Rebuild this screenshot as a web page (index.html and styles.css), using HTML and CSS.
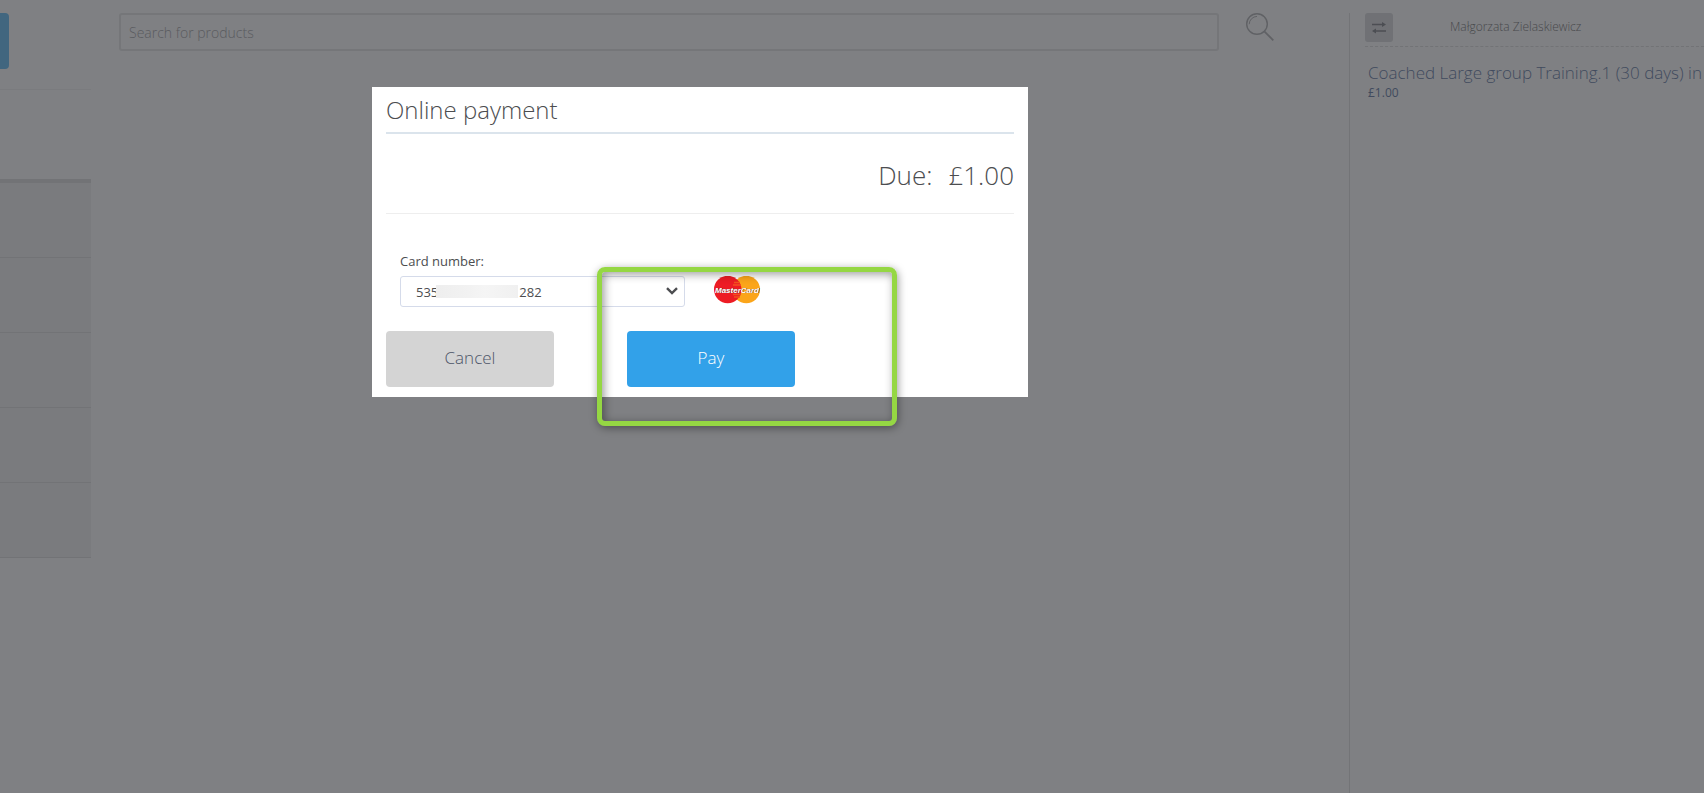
FILE: index.html
```html
<!DOCTYPE html>
<html lang="en">
<head>
<meta charset="utf-8">
<meta name="viewport" content="width=device-width, initial-scale=1">
<title>Online payment</title>
<link rel="stylesheet" href="styles.css">
</head>
<body>
<div class="app">
  <aside class="sidebar">
    <div class="sidebar-top"><button class="sidebar-action" type="button" aria-label="New sale"></button></div>
    <ul class="category-list">
      <li></li><li></li><li></li><li></li><li></li>
    </ul>
  </aside>

  <main class="catalog">
    <form class="search">
      <input class="search-input" type="text" placeholder="Search for products" aria-label="Search for products">
      <button class="search-button" type="button" aria-label="Search">
        <svg viewBox="0 0 28 28" width="28" height="28" fill="none" stroke="#606165">
          <circle cx="11" cy="11" r="10.3" stroke-width="1.4"/>
          <path d="M3.2 11.2A8 8 0 0 1 11 3.4" stroke-width="1"/>
          <path d="M18.3 18.3L27.3 27.3" stroke-width="1.8"/>
        </svg>
      </button>
    </form>
  </main>

  <aside class="cart">
    <header class="cart-header">
      <button class="swap-button" type="button" aria-label="Change client">
        <svg viewBox="0 0 14 12" width="14" height="12" fill="none" stroke="#4c4e53" stroke-width="1.3">
          <path d="M0 2.5H11M3 9H14"/>
          <path d="M10 0L14 2.5L10 5ZM4 6.5L0 9L4 11.5Z" fill="#4c4e53" stroke="none"/>
        </svg>
      </button>
      <span class="client-name">Małgorzata Zielaskiewicz</span>
    </header>
    <div class="cart-item">
      <div class="item-name">Coached Large group Training.1 (30 days) in</div>
      <div class="item-price">£1.00</div>
    </div>
  </aside>
</div>

<div class="overlay">
  <section class="dialog" role="dialog" aria-labelledby="dialog-title">
    <h1 class="dialog-title" id="dialog-title">Online payment</h1>
    <div class="due"><span>Due:</span><span>£1.00</span></div>
    <div class="card-field">
      <label class="card-label" for="card">Card number:</label>
      <div class="card-row">
        <div class="select-wrap">
          <select class="card-select" id="card">
            <option>535&nbsp;&nbsp;&nbsp;&nbsp;&nbsp;&nbsp;&nbsp;&nbsp;&nbsp;&nbsp;&nbsp;&nbsp;&nbsp;&nbsp;&nbsp;&nbsp;&nbsp;&nbsp;&nbsp;&nbsp;&nbsp;&nbsp;&nbsp;&nbsp;282</option>
          </select>
          <span class="number-mask"></span>
          <svg class="chevron" viewBox="0 0 12 8" width="12" height="8" fill="none" stroke="#4c4d50" stroke-width="2.4"><path d="M1 1.2L6 6L11 1.2"/></svg>
        </div>
        <svg class="card-logo" viewBox="0 0 48 28" width="48" height="28" role="img" aria-label="MasterCard">
          <circle cx="33.3" cy="13.5" r="13.7" fill="#fba51a"/>
          <circle cx="14.7" cy="13.5" r="13.7" fill="#ed1c24"/>
          <path d="M21 6.5H27M20 9H28M20 18.5H28M21 21H27" stroke="#f4511f" stroke-width="1.3"/>
          <text class="logo-shadow" x="24.6" y="17.2" text-anchor="middle">MasterCard</text>
          <text class="logo-text" x="24" y="16.5" text-anchor="middle">MasterCard</text>
        </svg>
      </div>
    </div>
    <div class="actions">
      <button class="button cancel" type="button">Cancel</button>
      <button class="button pay" type="button">Pay</button>
    </div>
    <div class="highlight"></div>
  </section>
</div>
</body>
</html>
```

FILE: styles.css
```css
* { box-sizing: border-box; }

body {
  margin: 0;
  background: #7f8083;
  color: #4c4d50;
  font-family: "Open Sans", "Noto Sans", sans-serif;
  font-size: 13px;
}

button, input, select { font: inherit; }
button { border: 0; padding: 0; }

.app {
  display: flex;
  min-height: 100vh;
  overflow: hidden;
}

/* Left column */
.sidebar { flex: 0 0 91px; padding-top: 13px; }

.sidebar-top {
  height: 77px;
  border-bottom: 1px solid #7a7b7e;
}

.sidebar-action {
  display: block;
  width: 9px;
  height: 56px;
  border-radius: 0 4px 4px 0;
  background: #41667f;
}

.category-list {
  margin: 89px 0 0;
  padding: 0;
  list-style: none;
  border-top: 4px solid #727376;
}

.category-list li {
  height: 75px;
  border-bottom: 1px solid #727376;
  background: #7a7b7e;
}

/* Product search */
.catalog { flex: 1; min-width: 0; padding: 13px 75px 0 28px; }

.search { display: flex; align-items: flex-start; gap: 27px; }

.search-input {
  flex: 1;
  min-width: 0;
  height: 38px;
  padding: 0 8px;
  border: 2px solid #757679;
  border-radius: 3px;
  background: transparent;
  color: #606165;
  font-size: 14px;
  font-weight: 300;
}

.search-input::placeholder { color: #5a5b5f; opacity: 1; }

.search-button { background: none; }
.search-button svg { display: block; }

/* Cart */
.cart {
  flex: 0 0 355px;
  min-width: 0;
  margin-top: 13px;
  padding-left: 15px;
  border-left: 1px solid #737477;
}

.cart-header {
  display: flex;
  align-items: flex-start;
  gap: 57px;
  height: 34px;
  border-bottom: 1px dashed #727376;
}

.swap-button {
  display: grid;
  place-items: center;
  width: 28px;
  height: 29px;
  border-radius: 3px;
  background: #707175;
}

.client-name {
  color: #48494c;
  font-size: 12px;
  font-weight: 300;
  line-height: 28px;
}

.cart-item { padding: 13px 0 0 3px; color: #414b5e; white-space: nowrap; }
.item-name { font-size: 17px; font-weight: 300; line-height: 26px; }
.item-price { font-size: 12px; line-height: 14px; }

/* Payment dialog */
.overlay {
  position: absolute;
  inset: 0;
  padding: 87px 20px 20px 372px;
}

.dialog {
  position: relative;
  max-width: 656px;
  padding: 0 14px 10px;
  background: #fff;
}

.dialog-title {
  margin: 0;
  border-bottom: 2px solid #dbe4ec;
  font-size: 24px;
  font-weight: 300;
  line-height: 45px;
}

.due {
  display: flex;
  justify-content: flex-end;
  gap: 16px;
  padding: 21px 0 18px;
  border-bottom: 1px solid #eee;
  font-size: 26px;
  font-weight: 300;
  line-height: 40px;
}

.card-field { padding: 37px 14px 0; }
.card-label { display: block; line-height: 20px; }

.card-row {
  display: flex;
  align-items: flex-start;
  gap: 28px;
  padding-top: 5px;
}

.select-wrap { position: relative; flex: 0 1 285px; }

.card-select {
  display: block;
  appearance: none;
  width: 100%;
  height: 31px;
  padding: 0 15px;
  border: 1px solid #d5dbea;
  border-radius: 3px;
  background: #fff;
  color: #4c4d50;
}

.number-mask {
  position: absolute;
  top: 9px;
  left: 36px;
  width: 82px;
  height: 13px;
  background: linear-gradient(90deg, #eee, #f2f2f2 40%, #f5f5f5 60%, #f0f0f0);
  pointer-events: none;
}

.chevron {
  position: absolute;
  top: 11px;
  right: 7px;
  pointer-events: none;
}

.card-logo { display: block; flex: none; }
.card-logo text { font: italic 700 8px "Liberation Sans", sans-serif; }
.logo-shadow { fill: #5a3030; }
.logo-text { fill: #fff; }

.actions { display: flex; gap: 73px; padding-top: 24px; }

.button {
  width: 168px;
  height: 56px;
  padding-bottom: 3px;
  border-radius: 4px;
  font-size: 17px;
  font-weight: 300;
}

.cancel { background: #d4d4d4; color: #4d5468; }
.pay { background: #32a1e9; color: #fff; }

/* Callout frame round the pay button */
.highlight {
  position: absolute;
  top: 180px;
  left: 225px;
  width: 300px;
  height: 159px;
  border: 5px solid #95d743;
  border-radius: 8px;
  box-shadow: 1px 2px 8px rgba(0, 0, 0, .4), inset 2px 2px 10px rgba(0, 0, 0, .4);
  pointer-events: none;
}
```
